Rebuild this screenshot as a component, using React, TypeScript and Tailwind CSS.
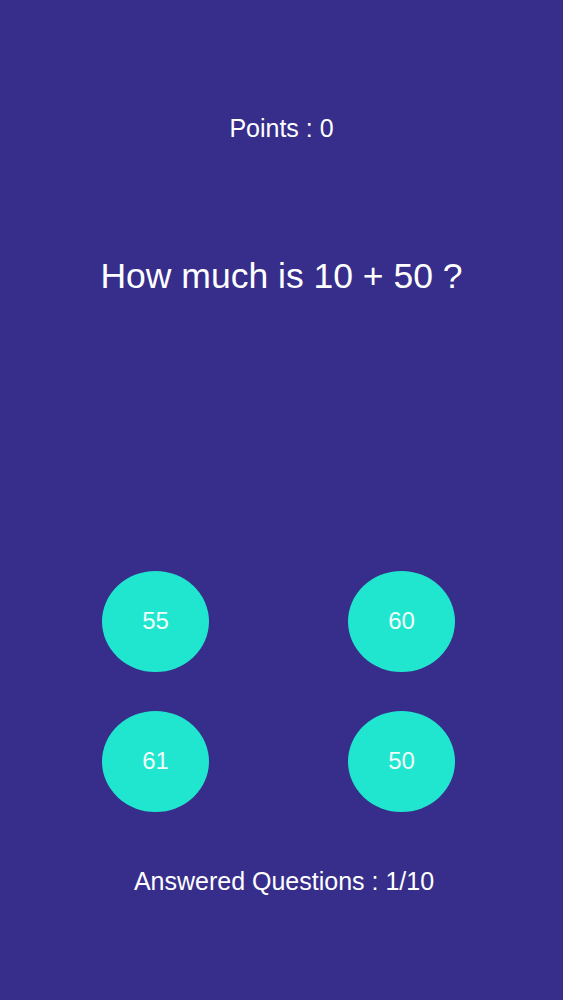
export default function App() {
  const answers = ["55", "60", "61", "50"];

  return (
    <div className="min-h-[1000px] w-full bg-[#372e8b] flex flex-col items-center font-['Liberation_Sans',Arial,sans-serif] text-white">
      <div className="pt-[116px] text-[25px] leading-none">Points : 0</div>

      <h1 className="mt-[118px] text-[35.5px] leading-none">How much is 10 + 50 ?</h1>

      <div className="mt-[276px] self-start ml-[102px] grid grid-cols-[107px_107px] gap-x-[139px] gap-y-[39px]">
        {answers.map((a) => (
          <button
            key={a}
            className="w-[107px] h-[101px] rounded-[50%] bg-[#21e6cf] flex items-center justify-center text-[24px] leading-none text-[#effdfb]"
          >
            {a}
          </button>
        ))}
      </div>

      <div className="mt-[57px] pl-[5px] text-[25px] leading-none">Answered Questions : 1/10</div>
    </div>
  );
}
